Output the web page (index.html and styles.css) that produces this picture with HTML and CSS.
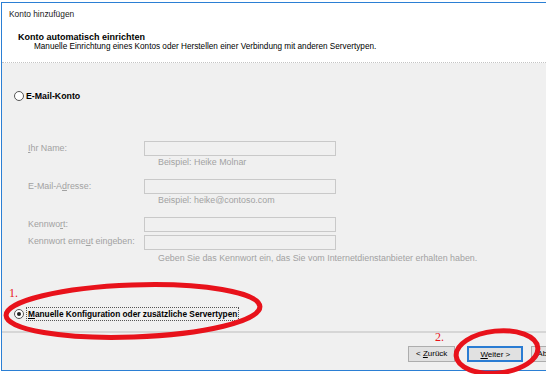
FILE: index.html
```html
<!DOCTYPE html>
<html lang="de">
<head>
    <meta charset="UTF-8">
    <title>Konto hinzufügen</title>
    <link rel="stylesheet" href="styles.css">
</head>
<body>

<div class="window">
    <header class="dialog-head">
        <div class="title">Konto hinzufügen</div>
        <div class="intro">
            <h1>Konto automatisch einrichten</h1>
            <p>Manuelle Einrichtung eines Kontos oder Herstellen einer Verbindung mit anderen Servertypen.</p>
        </div>
    </header>

    <main class="dialog-body">
        <div class="option">
            <span class="radio"></span>
            <span class="option-label">E-Mail-Konto</span>
        </div>

        <div class="fields">
            <span class="field-label"><u>I</u>hr Name:</span>
            <span class="input"></span>
            <span></span>
            <span class="hint">Beispiel: Heike Molnar</span>

            <span class="field-label">E-Mail-A<u>d</u>resse:</span>
            <span class="input"></span>
            <span></span>
            <span class="hint">Beispiel: heike@contoso.com</span>

            <span class="field-label">Kennwo<u>r</u>t:</span>
            <span class="input"></span>
            <span class="field-label">Kennwort erne<u>u</u>t eingeben:</span>
            <span class="input input-close"></span>
            <span></span>
            <span class="hint hint-wide">Geben Sie das Kennwort ein, das Sie vom Internetdienstanbieter erhalten haben.</span>
        </div>

        <div class="option option-manual">
            <span class="radio checked"></span>
            <span class="option-label focus"><u>M</u>anuelle Konfiguration oder zusätzliche Servertypen</span>
        </div>
    </main>

    <footer class="dialog-foot">
        <button class="btn">&lt; <u>Z</u>urück</button>
        <button class="btn btn-default"><u>W</u>eiter &gt;</button>
        <button class="btn btn-cancel">Abbrechen</button>
    </footer>
</div>

<!-- red hand-drawn marks on top of the screenshot -->
<svg class="marks" width="546" height="374" viewBox="0 0 546 374">
    <text x="9" y="297" class="mark-num">1.</text>
    <ellipse cx="133" cy="311" rx="127" ry="26" transform="rotate(-2 133 311)" class="mark-ring"/>
    <text x="435" y="341" class="mark-num">2.</text>
    <ellipse cx="497" cy="352" rx="41" ry="21" transform="rotate(-6 497 352)" class="mark-ring"/>
</svg>

</body>
</html>
```

FILE: styles.css
```css
:root {
    --blue: #2b7fd4;
    --panel: #f0f0f0;
    --muted: #a2a2a2;
    --red: #e8121b;
}

* {
    margin: 0;
    padding: 0;
    box-sizing: border-box;
}

body {
    width: 546px;
    height: 374px;
    overflow: hidden;
    background: #fff;
    font-family: "Liberation Sans", Arial, sans-serif;
    font-size: 8px;
    line-height: 12px;
    color: #000;
    position: relative;
}

.window {
    margin: 2px 0 0 1px;
    height: 369px;
    border-top: 1px solid var(--blue);
    border-left: 1px solid var(--blue);
    border-bottom: 1px solid var(--blue);
    display: flex;
    flex-direction: column;
}

.dialog-head {
    height: 60px;
    background: #fff;
    border-bottom: 1px dotted #c4c4c4;
}

.title {
    padding: 5px 0 0 7px;
    font-size: 8.4px;
    color: #1a1a1a;
}

.intro {
    padding: 12px 0 0 16px;
}

.intro h1 {
    font-size: 9px;
    font-weight: bold;
    line-height: 10px;
}

.intro p {
    padding-left: 16px;
    font-size: 8.2px;
    line-height: 10px;
}

.dialog-body {
    height: 270px;
    background: var(--panel);
    padding: 27px 0 0 12px;
    border-bottom: 2px solid #d6d6d6;
}

.option {
    display: flex;
    align-items: center;
    gap: 2px;
    height: 12px;
}

.option-label {
    font-size: 8.8px;
    font-weight: bold;
}

.radio {
    width: 10px;
    height: 10px;
    border: 1px solid #555;
    border-radius: 50%;
    background: #fff;
    display: flex;
    align-items: center;
    justify-content: center;
}

.radio.checked::after {
    content: "";
    width: 4px;
    height: 4px;
    border-radius: 50%;
    background: #222;
}

.focus {
    padding: 0 1px;
    border: 1px dotted #555;
    font-size: 8.3px;
    line-height: 12px;
}

.fields {
    display: grid;
    grid-template-columns: 116px 192px;
    align-items: center;
    margin: 39px 0 0 14px;
    font-size: 8.9px;
    color: var(--muted);
}

.input {
    height: 15px;
    border: 1px solid #c9c9c9;
    background: var(--panel);
}

.input-close {
    margin-top: 3px;
}

.field-label {
    line-height: 15px;
    white-space: nowrap;
}

.hint {
    padding: 0 0 11px 14px;
    line-height: 12px;
    white-space: nowrap;
}

.hint-wide {
    padding: 2px 0 0 14px;
}

.option-manual {
    margin-top: 44px;
}

.dialog-foot {
    flex: 1;
    display: flex;
    align-items: flex-start;
    padding: 13px 0 0 406px;
    background: var(--panel);
    overflow: hidden;
}

.btn {
    flex-shrink: 0;
    height: 16px;
    padding: 0 7px;
    font: inherit;
    line-height: 14px;
    color: #000;
    background: #e1e1e1;
    border: 1px solid #adadad;
}

.btn-default {
    width: 56px;
    margin-left: 12px;
    border: 2px solid #2a7cd3;
}

.btn-cancel {
    width: 56px;
    margin-left: 8px;
    padding-left: 5px;
    text-align: left;
}

.marks {
    position: absolute;
    left: 0;
    top: 0;
    pointer-events: none;
}

.mark-num {
    font-family: "Liberation Serif", serif;
    font-size: 12px;
    fill: var(--red);
}

.mark-ring {
    fill: none;
    stroke: var(--red);
    stroke-width: 5;
}
```
